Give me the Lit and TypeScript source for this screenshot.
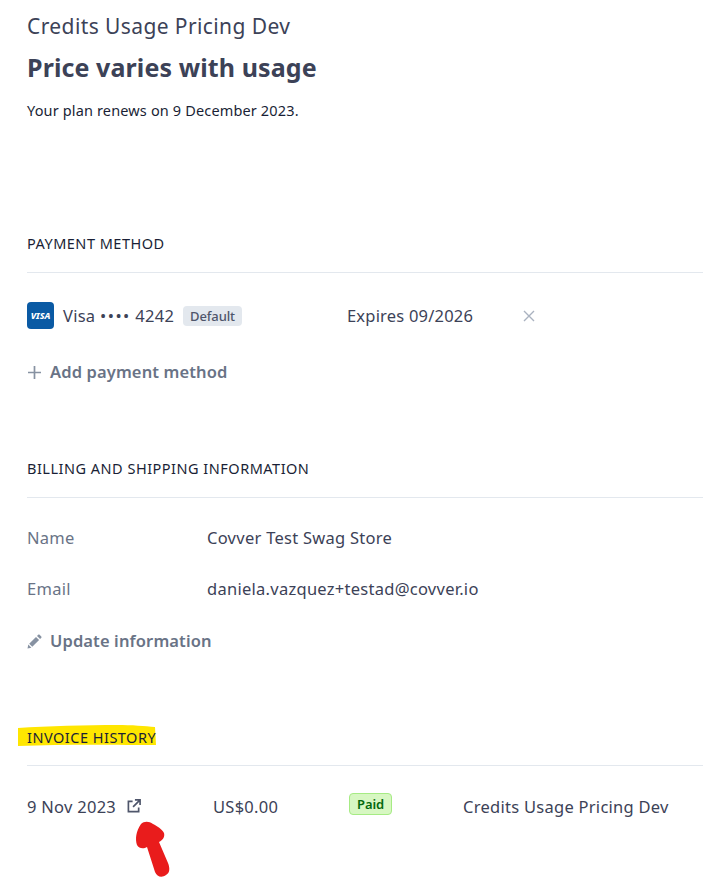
import { LitElement, html, css } from "lit";
import { customElement } from "lit/decorators.js";

@customElement("app-root")
export class AppRoot extends LitElement {
  static styles = css`
    :host { display: block; position: relative; width: 703px; height: 878px; overflow: hidden; background: #fff;
      font-family: "Noto Sans", "Open Sans", sans-serif; color: #3c4257; font-size: 16.5px; letter-spacing: 0.27px; }
    .page { padding: 13px 0 0 27px; display: flex; flex-direction: column; }
    .plan { font-size: 21px; line-height: 27px; color: #3c4257; letter-spacing: 0.4px; }
    .price { font-size: 25px; line-height: 34px; font-weight: 700; margin-top: 10px; color: #3c4257; letter-spacing: 0.1px; }
    .renew { font-size: 14.5px; line-height: 20px; margin-top: 16px; color: #1a1f36; letter-spacing: 0.15px; }
    .section { display: flex; flex-direction: column; }
    .pay { margin-top: 113px; }
    .bill { margin-top: 74px; }
    .inv { margin-top: 74px; }
    .head { font-size: 14.5px; line-height: 20px; color: #1a1f36; letter-spacing: 0.5px; padding-bottom: 19px; border-bottom: 1px solid #e3e8ee; position: relative; display: flex; }
    .inv .head { padding-bottom: 18px; }
    .head span { position: relative; display: block; }
    .mark { position: absolute; left: -10px; top: -2px; width: 139px; height: 21px; }
    .card { display: flex; align-items: center; height: 27px; margin-top: 29px; }
    .visa { width: 27px; height: 27px; border-radius: 4px; background: #0a5aa4; color: #fff; font-size: 9px; font-weight: 800; font-style: italic; letter-spacing: 0; display: flex; align-items: center; justify-content: center; flex: none; }
    .num { margin-left: 9px; width: 120px; white-space: nowrap; }
    .dots { letter-spacing: 1.5px; }
    .badge { font-size: 13px; line-height: 20px; font-weight: 500; background: #e3e8ee; color: #4f566b; border-radius: 4px; padding: 0 7px; letter-spacing: -0.1px; }
    .exp { margin-left: 105px; width: 176px; letter-spacing: 0.2px; }
    .x { width: 12px; height: 12px; display: block; }
    .action { display: flex; align-items: center; font-weight: 600; color: #697386; font-size: 16.5px; line-height: 24px; letter-spacing: 0.12px; }
    .action svg { width: 15px; height: 15px; margin-right: 8px; flex: none; }
    .add { margin-top: 31px; }
    .rows { display: grid; grid-template-columns: 180px 1fr; row-gap: 26px; margin-top: 27px; line-height: 25px; }
    .label { color: #697386; }
    .upd { margin-top: 28px; }
    .line { display: grid; grid-template-columns: 186px 136px 114px 1fr; align-items: center; margin-top: 27px; height: 26px; white-space: nowrap; }
    .date { display: flex; align-items: center; gap: 11px; }
    .date svg { width: 14px; height: 14px; }
    .paid { justify-self: start; font-size: 13px; line-height: 20px; font-weight: 600; background: #d7f7c2; color: #05690d; border: 1px solid #a6eb84; border-radius: 4px; padding: 0 7px; letter-spacing: -0.1px; margin-top: -5px; }
    .arrow { position: absolute; left: 128px; top: 816px; width: 48px; height: 64px; }
  `;

  render() {
    return html`
      <div class="page">
        <div class="plan">Credits Usage Pricing Dev</div>
        <div class="price">Price varies with usage</div>
        <div class="renew">Your plan renews on 9 December 2023.</div>

        <section class="section pay">
          <div class="head">PAYMENT METHOD</div>
          <div class="card">
            <div class="visa">VISA</div>
            <div class="num">Visa <span class="dots">••••</span> 4242</div>
            <div class="badge">Default</div>
            <div class="exp">Expires 09/2026</div>
            <svg class="x" viewBox="0 0 12 12" fill="none" stroke="#aab2c0" stroke-width="1.4"><path d="M1 1l10 10M11 1L1 11"/></svg>
          </div>
          <div class="action add">
            <svg viewBox="0 0 15 15" fill="none" stroke="#8792a2" stroke-width="1.7"><path d="M7.5 1v13M1 7.5h13"/></svg>
            Add payment method
          </div>
        </section>

        <section class="section bill">
          <div class="head">BILLING AND SHIPPING INFORMATION</div>
          <div class="rows">
            <div class="label">Name</div><div>Covver Test Swag Store</div>
            <div class="label">Email</div><div>daniela.vazquez+testad@covver.io</div>
          </div>
          <div class="action upd">
            <svg viewBox="0 0 15 15" fill="#8792a2"><path d="M0.5 14.5l.8-3.9 3.1 3.1zM2.2 9.7l6.8-6.8 3.1 3.1-6.8 6.8zM10 1.9l1.2-1.2c.4-.4 1-.4 1.4 0l1.7 1.7c.4.4.4 1 0 1.4L13.1 5z"/></svg>
            Update information
          </div>
        </section>

        <section class="section inv">
          <div class="head">
            <svg class="mark" viewBox="0 0 139 21" preserveAspectRatio="none"><path fill="#ffe600" d="M1 3C30 1 70 0 100 0c15 0 28 1 38 2l1 18c-35 0-90-1-138 1z"/></svg>
            <span>INVOICE HISTORY</span>
          </div>
          <div class="line">
            <div class="date">9 Nov 2023
              <svg viewBox="0 0 15 15" fill="none" stroke="#4f566b" stroke-width="1.8"><path d="M6 2.5H1.5v11h11V9M8.5 1h5.5v5.5M14 1L6.5 8.5"/></svg>
            </div>
            <div>US$0.00</div>
            <div class="paid">Paid</div>
            <div>Credits Usage Pricing Dev</div>
          </div>
        </section>
      </div>
      <svg class="arrow" viewBox="0 0 48 64" fill="none"><path fill="#e91c1c" d="M13 8c3-3 8-3 12 0 4 2 9 5 11 9 1 4-1 7-5 9l9 21c2 5 2 10-2 12-4 3-9 2-11-3l-8-25c-3 2-8 2-10-2-2-6-1-14 4-21z"/></svg>
    `;
  }
}
